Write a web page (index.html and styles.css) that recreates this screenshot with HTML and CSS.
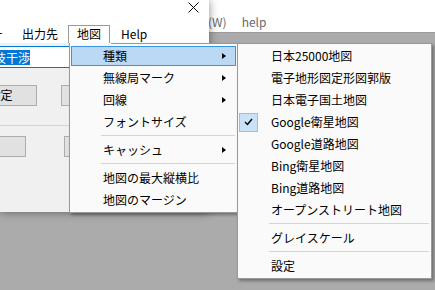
FILE: index.html
```html
<!DOCTYPE html>
<html lang="ja">
<head>
<meta charset="utf-8">
<link rel="stylesheet" href="styles.css">
</head>
<body>
<div class="desk">
  <div class="appbar">
    <span class="am-hidden">ウィンドウ</span><span class="am">(W)</span><span class="am help">help</span>
  </div>
  <div class="appbody"></div>
</div>

<div class="dialog">
  <div class="tbar">
    <svg class="close" width="11" height="11" viewBox="0 0 11 11"><path d="M0.5 0.5 L10.5 10.5 M10.5 0.5 L0.5 10.5" stroke="#000" stroke-width="1" fill="none"/></svg>
  </div>
  <div class="mbar">
    <span class="mt first">ー</span>
    <span class="mt out">出力先</span>
    <span class="mt open">地図</span>
    <span class="mt helpm">Help</span>
  </div>
  <div class="dbody">
    <div class="tb"><span class="selt">技干渉</span></div>
    <div class="brow">
      <div class="btn b1">設定</div>
      <div class="btn b1b"></div>
    </div>
    <div class="hr"></div>
    <div class="brow r2">
      <div class="btn b2"></div>
      <div class="btn b2b"></div>
    </div>
  </div>
</div>

<div class="menu main">
  <div class="mi sel"><span class="gut"></span><span class="lbl">種類</span><span class="arr"></span></div>
  <div class="mi"><span class="gut"></span><span class="lbl">無線局マーク</span><span class="arr"></span></div>
  <div class="mi"><span class="gut"></span><span class="lbl">回線</span><span class="arr"></span></div>
  <div class="mi"><span class="gut"></span><span class="lbl">フォントサイズ</span></div>
  <div class="sep"></div>
  <div class="mi"><span class="gut"></span><span class="lbl">キャッシュ</span><span class="arr"></span></div>
  <div class="sep"></div>
  <div class="mi"><span class="gut"></span><span class="lbl">地図の最大縦横比</span></div>
  <div class="mi"><span class="gut"></span><span class="lbl">地図のマージン</span></div>
</div>

<div class="menu sub">
  <div class="mi"><span class="gut"></span><span class="lbl">日本25000地図</span></div>
  <div class="mi"><span class="gut"></span><span class="lbl">電子地形図定形図郭版</span></div>
  <div class="mi"><span class="gut"></span><span class="lbl">日本電子国土地図</span></div>
  <div class="mi"><span class="gut"><span class="chk"><svg width="9" height="8" viewBox="0 0 9 8"><path d="M1 4 L3.5 6.5 L8 1" stroke="#000" stroke-width="1.4" fill="none"/></svg></span></span><span class="lbl">Google衛星地図</span></div>
  <div class="mi"><span class="gut"></span><span class="lbl">Google道路地図</span></div>
  <div class="mi"><span class="gut"></span><span class="lbl">Bing衛星地図</span></div>
  <div class="mi"><span class="gut"></span><span class="lbl">Bing道路地図</span></div>
  <div class="mi"><span class="gut"></span><span class="lbl">オープンストリート地図</span></div>
  <div class="sep"></div>
  <div class="mi"><span class="gut"></span><span class="lbl">グレイスケール</span></div>
  <div class="sep"></div>
  <div class="mi"><span class="gut"></span><span class="lbl">設定</span></div>
</div>
</body>
</html>
```
FILE: styles.css
```css
* { box-sizing: border-box; }
html, body { margin: 0; padding: 0; }
body {
  width: 435px;
  height: 290px;
  overflow: hidden;
  position: relative;
  background: #ababab;
  font-family: "Noto Sans CJK JP", "Noto Sans", sans-serif;
  font-size: 12px;
  color: #000;
}

/* background application window */
.desk { width: 435px; height: 290px; display: flex; flex-direction: column; }
.appbar {
  height: 33px;
  background: #fff;
  border-bottom: 1px solid #9c9c9c;
  display: flex;
  align-items: center;
  padding-top: 12px;
  line-height: 16px;
  color: #6a6a6a;
}
.am-hidden { width: 208px; text-align: right; color: #6a6a6a; }
.am { }
.help { margin-left: 15px; }
.appbody { flex: 1; background: #ababab; }

/* dialog */
.dialog {
  position: absolute;
  left: 0;
  top: 0;
  width: 209px;
  height: 212px;
  background: #f0f0f0;
  overflow: hidden;
  box-shadow: 0 0 9px rgba(0, 0, 0, 0.45);
  display: flex;
  flex-direction: column;
}
.tbar {
  height: 25px;
  background: #fff;
  display: flex;
  justify-content: flex-end;
  align-items: flex-start;
  padding: 2px 10px 0 0;
}
.close { display: block; }
.mbar {
  height: 18px;
  background: #fff;
  display: flex;
  align-items: stretch;
  line-height: 16px;
}
.mt {
  padding: 0 8px;
  border: 1px solid transparent;
  border-bottom: none;
  white-space: nowrap;
}
.mt.first { margin-left: -18px; }
.mt.out { margin-left: 1px; }
.mt.open { margin-left: 1px; border-color: #9a9a9a; background: #fff; }
.mt.helpm { margin-left: 2px; }

.dbody { flex: 1; display: flex; flex-direction: column; }
.tb {
  margin-top: 3px;
  margin-left: -10px;
  width: 110px;
  height: 22px;
  border: 1px solid #0078d7;
  background: #fff;
  display: flex;
  align-items: center;
}
.selt {
  margin-left: 3px;
  background: #0078d7;
  color: #fff;
  line-height: 15px;
  white-space: nowrap;
}
.brow { display: flex; margin-top: 17px; height: 21px; }
.btn {
  height: 21px;
  background: #e1e1e1;
  border: 1px solid #adadad;
  text-align: center;
  line-height: 18px;
  flex: none;
}
.b1 { margin-left: -36px; width: 73px; }
.b1b { margin-left: 24px; width: 75px; }
.hr { margin-top: 19px; height: 1px; background: #d4d4d4; }
.brow.r2 { margin-top: 10px; }
.b2 { margin-left: -47px; width: 73px; }
.b2b { margin-left: 38px; width: 75px; }

/* menus */
.menu {
  position: absolute;
  background: #fafafa;
  border: 1px solid #999;
  display: flex;
  flex-direction: column;
  padding: 1px 1px;
  box-shadow: 2px 2px 3px rgba(0, 0, 0, 0.35);
  line-height: 16px;
}
.menu.main {
  left: 69px;
  top: 43px;
  width: 169px;
  border-top: none;
  padding-top: 2px;
}
.menu.main::before {
  content: "";
  position: absolute;
  top: 0;
  left: 41px;
  right: 0;
  height: 1px;
  background: #999;
}
.menu.sub {
  left: 237px;
  top: 43px;
  width: 195px;
}
.mi {
  height: 20px;
  margin: 1px 0;
  border: 1px solid transparent;
  display: flex;
  align-items: center;
  white-space: nowrap;
  padding-right: 9px;
}
.mi.sel { background: #bbd9f5; border-color: #3a94e4; }
.gut { width: 31px; flex: none; display: flex; align-items: center; }
.lbl { flex: 1; }
.arr {
  width: 0;
  height: 0;
  border-top: 3.5px solid transparent;
  border-bottom: 3.5px solid transparent;
  border-left: 4px solid #000;
}
.sep { height: 1px; background: #d5d5d5; margin: 2px 1px 3px 30px; flex: none; }
.chk {
  width: 19px;
  height: 19px;
  margin-left: -1px;
  background: #c9e2f8;
  border: 1px solid #8fc3ef;
  display: flex;
  align-items: center;
  justify-content: center;
}
.chk svg { display: block; }
```
